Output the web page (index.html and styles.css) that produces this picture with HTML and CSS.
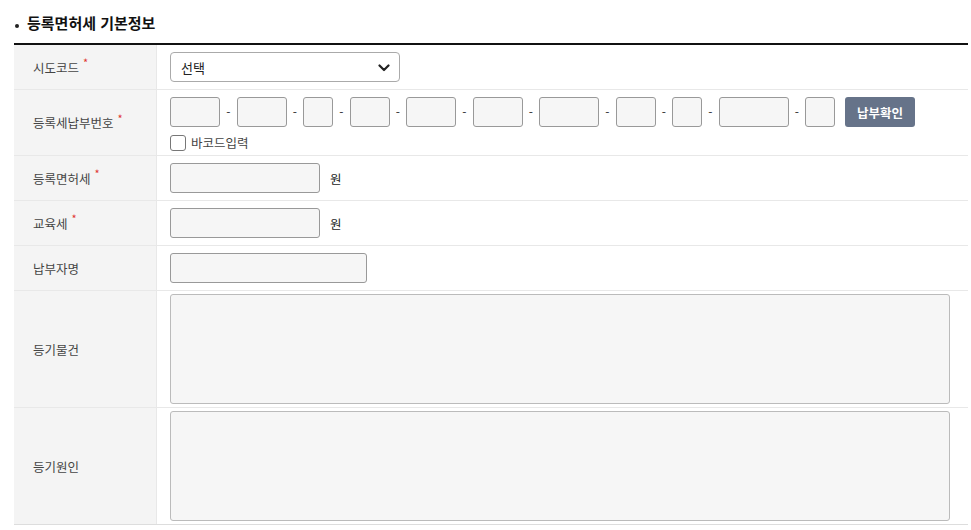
FILE: index.html
```html
<!DOCTYPE html>
<html lang="ko">
<head>
<meta charset="utf-8">
<title>등록면허세 기본정보</title>
<link rel="stylesheet" href="styles.css">
</head>
<body>
<div class="wrap">
  <h2 class="title"><span class="dot"></span>등록면허세 기본정보</h2>
  <div class="form">
    <div class="row r-std">
      <div class="label">시도코드<span class="req">*</span></div>
      <div class="cell">
        <div class="select"><span>선택</span>
          <svg width="12" height="8" viewBox="0 0 12 8"><path d="M1.5 1.5 L6 6 L10.5 1.5" fill="none" stroke="#222" stroke-width="2.2" stroke-linecap="round" stroke-linejoin="round"/></svg>
        </div>
      </div>
    </div>
    <div class="row r-num">
      <div class="label">등록세납부번호<span class="req">*</span></div>
      <div class="cell col">
        <div class="nums">
          <span class="inp" style="width:50px"></span><span class="dash">-</span>
          <span class="inp" style="width:50px"></span><span class="dash">-</span>
          <span class="inp" style="width:30px"></span><span class="dash">-</span>
          <span class="inp" style="width:40px"></span><span class="dash">-</span>
          <span class="inp" style="width:50px"></span><span class="dash">-</span>
          <span class="inp" style="width:50px"></span><span class="dash">-</span>
          <span class="inp" style="width:60px"></span><span class="dash">-</span>
          <span class="inp" style="width:40px"></span><span class="dash">-</span>
          <span class="inp" style="width:30px"></span><span class="dash">-</span>
          <span class="inp" style="width:70px"></span><span class="dash">-</span>
          <span class="inp" style="width:30px"></span>
          <button class="btn">납부확인</button>
        </div>
        <label class="chk"><span class="box"></span>바코드입력</label>
      </div>
    </div>
    <div class="row r-std">
      <div class="label">등록면허세<span class="req">*</span></div>
      <div class="cell"><span class="inp w150"></span><span class="unit">원</span></div>
    </div>
    <div class="row r-std">
      <div class="label">교육세<span class="req">*</span></div>
      <div class="cell"><span class="inp w150"></span><span class="unit">원</span></div>
    </div>
    <div class="row r-std">
      <div class="label">납부자명</div>
      <div class="cell"><span class="inp w197"></span></div>
    </div>
    <div class="row r-ta">
      <div class="label">등기물건</div>
      <div class="cell"><span class="ta"></span></div>
    </div>
    <div class="row r-ta last">
      <div class="label">등기원인</div>
      <div class="cell"><span class="ta"></span></div>
    </div>
  </div>
</div>
</body>
</html>
```
FILE: styles.css
```css
* { box-sizing: border-box; }
html, body { margin: 0; padding: 0; background: #fff; }
body {
  font-family: "Noto Sans CJK KR", "Noto Sans", sans-serif;
  color: #333;
}
.wrap { padding: 12px 3px 0 14px; }
.title {
  margin: 0 0 9px 0;
  font-size: 15px;
  font-weight: 700;
  color: #111;
  line-height: 22px;
  display: flex;
  align-items: center;
  position: relative;
  left: -14px;
  padding-left: 27px;
}
.title .dot {
  position: absolute;
  left: 15px;
  top: 12px;
  width: 4px;
  height: 4px;
  border-radius: 50%;
  background: #222;
}
.form {
  border-top: 2px solid #111;
  border-bottom: 1px solid #ddd;
  width: 954px;
}
.row {
  display: flex;
  border-top: 1px solid #e8e8e8;
}
.row:first-child { border-top: none; }
.label {
  width: 143px;
  flex: none;
  background: #f4f4f4;
  border-right: 1px solid #e8e8e8;
  display: flex;
  align-items: center;
  padding-left: 19px;
  font-size: 12.5px;
  color: #444;
}
.req {
  color: #e0342f;
  font-size: 11px;
  margin-left: 4px;
  position: relative;
  top: -5px;
}
.cell {
  flex: 1;
  display: flex;
  align-items: center;
  padding: 7px 12px 7px 13px;
}
.r-std .cell { height: 44px; }
.r-num .cell { height: 65px; padding-top: 7px; padding-bottom: 4px; }
.cell.col { flex-direction: column; align-items: flex-start; justify-content: flex-start; }
.r-ta .cell { height: 116px; padding-top: 3px; padding-bottom: 3px; }
.select {
  width: 230px;
  height: 30px;
  border: 1px solid #aaa;
  border-radius: 4px;
  background: #fff;
  display: flex;
  align-items: center;
  justify-content: space-between;
  padding: 0 9px 0 10px;
  font-size: 13px;
  color: #222;
}
.select svg { margin-top: 1px; }
.nums { display: flex; align-items: center; height: 30px; }
.inp {
  display: inline-block;
  height: 30px;
  border: 1px solid #999;
  border-radius: 3px;
  background: #f6f6f6;
  flex: none;
}
.w150 { width: 150px; }
.w197 { width: 197px; }
.dash {
  width: 16.5px;
  flex: none;
  text-align: center;
  font-size: 12px;
  color: #333;
  line-height: 30px;
}
.btn {
  margin-left: 10px;
  width: 70px;
  height: 30px;
  border: none;
  border-radius: 3px;
  background: #667389;
  color: #fff;
  font-family: inherit;
  font-size: 12.5px;
  font-weight: 700;
  padding: 0;
}
.chk {
  display: flex;
  align-items: center;
  margin-top: 8px;
  font-size: 12.5px;
  color: #444;
  line-height: 16px;
}
.chk .box {
  width: 16px;
  height: 16px;
  border: 1px solid #777;
  border-radius: 3px;
  background: #fff;
  margin-right: 5px;
}
.unit {
  margin-left: 10px;
  font-size: 12.5px;
  color: #222;
}
.ta {
  display: block;
  width: 780px;
  height: 110px;
  border: 1px solid #bbb;
  border-radius: 3px;
  background: #f6f6f6;
}
```
